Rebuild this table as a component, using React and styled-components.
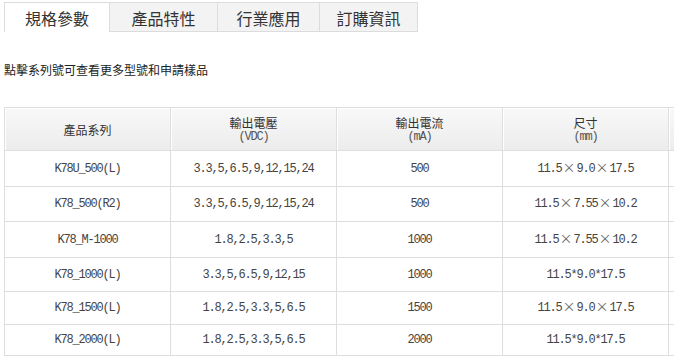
import React from "react";
import styled, { createGlobalStyle } from "styled-components";

const Global = createGlobalStyle`
  html, body { margin: 0; padding: 0; background: #fff; overflow: hidden; }
  body { font-family: "Noto Sans CJK TC", "Noto Sans", sans-serif; color: #333; }
`;

const Page = styled.div`
  padding: 2px 0 0 4px;
  width: 900px;
`;

const TabBar = styled.div`
  display: flex;
  height: 30px;
`;

const Tab = styled.div`
  box-sizing: border-box;
  width: ${(p) => p.$w}px;
  height: 30px;
  display: flex;
  align-items: center;
  justify-content: center;
  font-size: 16px;
  color: #333;
  background: ${(p) => (p.$active ? "#fff" : "#f3f3f3")};
  border: 1px solid #dcdcdc;
  border-left: ${(p) => (p.$first ? "1px solid #dcdcdc" : "none")};
  border-bottom: ${(p) => (p.$active ? "none" : "1px solid #dcdcdc")};
  padding-top: 1px;
`;

const Note = styled.p`
  margin: 30px 0 0;
  font-size: 12px;
  line-height: 16px;
  color: #222;
`;

const Table = styled.table`
  margin-top: 29px;
  border-collapse: collapse;
  table-layout: fixed;
  width: 830px;
  border: 1px solid #dedede;
`;

const Col = styled.col`
  width: 166px;
`;

const HeadCell = styled.th`
  height: 42px;
  padding: 0;
  font-weight: normal;
  text-align: center;
  vertical-align: middle;
  border: 1px solid #dedede;
  background: linear-gradient(#f8f8f8, #ececec);
  box-shadow: inset 1px 1px 0 #fff;
`;

const HeadMain = styled.div`
  font-size: 12px;
  line-height: 15px;
  color: #333;
`;

const HeadSub = styled.div`
  font-family: "Liberation Mono", monospace;
  font-size: 12px;
  line-height: 14px;
  letter-spacing: -1.2px;
  color: #555;
`;

const Cell = styled.td`
  height: ${(p) => p.$h}px;
  padding: 0;
  text-align: center;
  vertical-align: middle;
  border: 1px solid #dedede;
  font-family: "Liberation Mono", "Noto Sans CJK TC", monospace;
  font-size: 12px;
  line-height: 14px;
  letter-spacing: -1.2px;
  color: #444;
`;

const Times = styled.span`
  display: inline-block;
  font-family: "Noto Sans CJK TC", sans-serif;
  font-size: 13px;
  line-height: 10px;
  height: 10px;
  letter-spacing: 0;
  color: #666;
  padding: 0 1px;
`;

const tabs = [
  { label: "規格參數", w: 106 },
  { label: "產品特性", w: 108 },
  { label: "行業應用", w: 102 },
  { label: "訂購資訊", w: 98 },
];

const heads = [
  ["產品系列"],
  ["輸出電壓", "(VDC)"],
  ["輸出電流", "(mA)"],
  ["尺寸", "(mm)"],
  [""],
];

const rows = [
  ["K78U_500(L)", "3.3,5,6.5,9,12,15,24", "500", "11.5×9.0×17.5", ""],
  ["K78_500(R2)", "3.3,5,6.5,9,12,15,24", "500", "11.5×7.55×10.2", ""],
  ["K78_M-1000", "1.8,2.5,3.3,5", "1000", "11.5×7.55×10.2", ""],
  ["K78_1000(L)", "3.3,5,6.5,9,12,15", "1000", "11.5*9.0*17.5", ""],
  ["K78_1500(L)", "1.8,2.5,3.3,5,6.5", "1500", "11.5×9.0×17.5", ""],
  ["K78_2000(L)", "1.8,2.5,3.3,5,6.5", "2000", "11.5*9.0*17.5", ""],
];

const heights = [35, 34, 35, 33, 32, 30];

function renderText(s) {
  const parts = s.split("×");
  return parts.map((p, i) => (
    <React.Fragment key={i}>
      {i > 0 && <Times>×</Times>}
      {p}
    </React.Fragment>
  ));
}

export default function App() {
  return (
    <Page>
      <Global />
      <TabBar>
        {tabs.map((t, i) => (
          <Tab key={t.label} $w={t.w} $active={i === 0} $first={i === 0}>
            {t.label}
          </Tab>
        ))}
      </TabBar>
      <Note>點擊系列號可查看更多型號和申請樣品</Note>
      <Table>
        <colgroup>
          {heads.map((_, i) => (
            <Col key={i} />
          ))}
        </colgroup>
        <thead>
          <tr>
            {heads.map((h, i) => (
              <HeadCell key={i}>
                {h[0] && <HeadMain>{h[0]}</HeadMain>}
                {h[1] && <HeadSub>{h[1]}</HeadSub>}
              </HeadCell>
            ))}
          </tr>
        </thead>
        <tbody>
          {rows.map((r, i) => (
            <tr key={i}>
              {r.map((c, j) => (
                <Cell key={j} $h={heights[i]}>
                  {renderText(c)}
                </Cell>
              ))}
            </tr>
          ))}
        </tbody>
      </Table>
    </Page>
  );
}
